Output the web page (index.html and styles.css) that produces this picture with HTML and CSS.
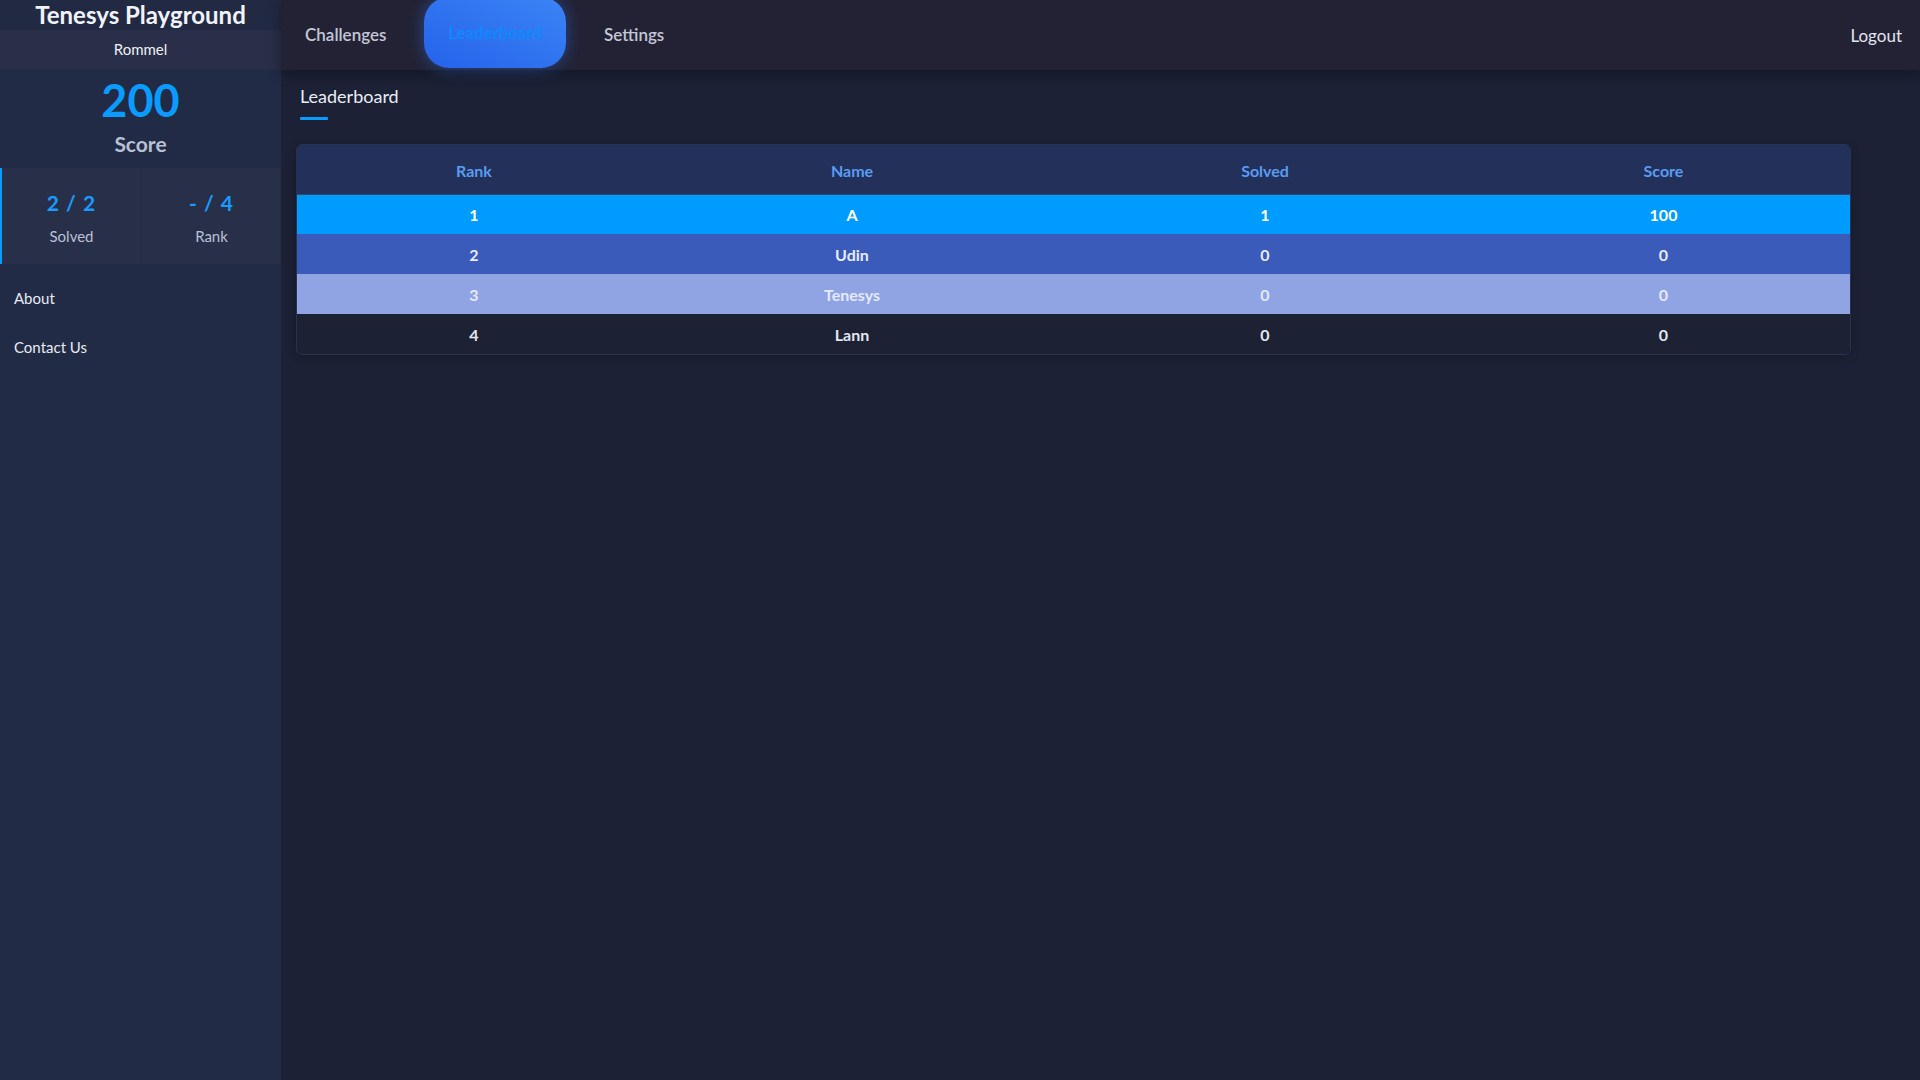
FILE: index.html
```html
<!DOCTYPE html>
<html lang="en">
<head>
<meta charset="utf-8">
<title>Tenesys Playground - Leaderboard</title>
<link rel="stylesheet" href="styles.css">
</head>
<body>
<div class="app">
  <aside class="sidebar">
    <div class="brand">Tenesys Playground</div>
    <div class="user">Rommel</div>
    <div class="score-block">
      <div class="score-value">200</div>
      <div class="score-label">Score</div>
    </div>
    <div class="stats">
      <div class="stat stat-active">
        <div class="stat-value">2 / 2</div>
        <div class="stat-label">Solved</div>
      </div>
      <div class="stat">
        <div class="stat-value">- / 4</div>
        <div class="stat-label">Rank</div>
      </div>
    </div>
    <nav class="side-links">
      <a class="side-link" href="#">About</a>
      <a class="side-link" href="#">Contact Us</a>
    </nav>
  </aside>
  <div class="main">
    <header class="topbar">
      <nav class="tabs">
        <a class="tab" href="#">Challenges</a>
        <a class="tab tab-active" href="#">Leaderboard</a>
        <a class="tab" href="#">Settings</a>
      </nav>
      <a class="logout" href="#">Logout</a>
    </header>
    <section class="content">
      <h2 class="page-title">Leaderboard</h2>
      <div class="title-bar"></div>
      <div class="board">
        <table class="board-table">
          <colgroup>
            <col class="c-rank">
            <col class="c-name">
            <col class="c-solved">
            <col class="c-score">
          </colgroup>
          <thead>
            <tr><th>Rank</th><th>Name</th><th>Solved</th><th>Score</th></tr>
          </thead>
          <tbody>
            <tr class="r-first"><td>1</td><td>A</td><td>1</td><td>100</td></tr>
            <tr class="r-second"><td>2</td><td>Udin</td><td>0</td><td>0</td></tr>
            <tr class="r-third"><td>3</td><td>Tenesys</td><td>0</td><td>0</td></tr>
            <tr class="r-other"><td>4</td><td>Lann</td><td>0</td><td>0</td></tr>
          </tbody>
        </table>
      </div>
    </section>
  </div>
</div>
</body>
</html>
```
FILE: styles.css
```css
* { box-sizing: border-box; }
html, body { margin: 0; padding: 0; }
body {
  background: #1c2135;
  font-family: Lato, "Open Sans", sans-serif;
  color: #e6e9f2;
  height: 1080px;
  overflow: hidden;
}
a { text-decoration: none; color: inherit; }

.app { display: flex; height: 1080px; }

/* Sidebar */
.sidebar {
  width: 281px;
  flex: 0 0 281px;
  background: #222b46;
  display: flex;
  flex-direction: column;
}
.brand {
  height: 30px;
  line-height: 30px;
  text-align: center;
  font-size: 24px;
  font-weight: 700;
  color: #f1f3f9;
  background: #222a43;
  white-space: nowrap;
}
.user {
  height: 39px;
  line-height: 39px;
  text-align: center;
  font-size: 15px;
  color: #eef0f6;
  background: #292f48;
}
.score-block {
  height: 99px;
  padding-top: 9px;
  text-align: center;
}
.score-value {
  font-size: 45px;
  line-height: 45px;
  font-weight: 700;
  color: #0a9bff;
}
.score-label {
  margin-top: 8px;
  font-size: 21px;
  line-height: 26px;
  font-weight: 700;
  color: #b9c0d6;
}
.stats {
  height: 96px;
  display: flex;
  background: #283049;
}
.stat {
  flex: 1;
  text-align: center;
  padding-top: 22px;
}
.stat + .stat { border-left: 1px solid #222a40; }
.stat-active { border-left: 2px solid #0a9bff; }
.stat-value {
  font-size: 21px;
  line-height: 26px;
  font-weight: 700;
  letter-spacing: 1px;
  color: #1a9bff;
}
.stat-label {
  margin-top: 10px;
  font-size: 15px;
  line-height: 20px;
  color: #b9c0d6;
}
.side-links {
  display: flex;
  flex-direction: column;
  padding-top: 10px;
}
.side-link {
  display: block;
  padding: 14px 14px 15px;
  font-size: 15px;
  line-height: 20px;
  color: #e8eaf2;
}

/* Main */
.main {
  flex: 1;
  display: flex;
  flex-direction: column;
  min-width: 0;
}
.topbar {
  height: 70px;
  flex: 0 0 70px;
  background: #232235;
  display: flex;
  justify-content: space-between;
  align-items: flex-start;
  box-shadow: 0 3px 12px rgba(8, 10, 20, 0.45);
  position: relative;
  z-index: 1;
}
.tabs { display: flex; gap: 14px; }
.tab {
  display: block;
  padding: 0 24px;
  height: 68px;
  line-height: 70px;
  font-size: 17px;
  font-weight: 600;
  color: #c3c7d5;
}
.tab-active {
  margin-top: -3px;
  height: 71px;
  line-height: 71px;
  border-radius: 25px;
  background: linear-gradient(to top right, #2563eb, #3b84f5);
  color: #0a8cff;
  font-weight: 500;
  box-shadow: 0 0 16px rgba(50, 120, 245, 0.45);
}
.logout {
  display: block;
  padding-right: 18px;
  height: 70px;
  line-height: 72px;
  font-size: 17px;
  color: #e4e6ee;
}

.content {
  padding: 14px 69px 0 15px;
}
.page-title {
  margin: 0;
  padding-left: 4px;
  font-size: 18px;
  line-height: 24px;
  font-weight: 400;
  color: #e8ecf4;
}
.title-bar {
  margin: 9px 0 0 4px;
  width: 28px;
  height: 3px;
  background: #0a9bff;
  border-radius: 1px;
}
.board {
  margin-top: 24px;
  border: 1px solid #283252;
  border-radius: 6px;
  overflow: hidden;
  box-shadow: 0 2px 8px rgba(0, 0, 0, 0.25);
}
.board-table {
  width: 100%;
  border-collapse: collapse;
  table-layout: fixed;
}
.c-rank { width: 354px; }
.c-name { width: 402px; }
.c-solved { width: 424px; }
.c-score { width: auto; }
.board-table th {
  height: 49px;
  padding: 2px 0 0;
  background: #22305a;
  color: #5a9cf2;
  font-size: 16px;
  font-weight: 700;
  text-align: center;
  border-bottom: 1px solid #3a4463;
}
.board-table td {
  height: 40px;
  padding: 0;
  font-size: 16px;
  font-weight: 700;
  text-align: center;
}
.r-first td { background: #009bff; color: #ffffff; }
.r-second td { background: #3a5bb9; color: #e8ecf8; }
.r-third td { background: #90a4e3; color: #e4eafb; }
.r-other td { background: #1c2234; color: #e2e6f0; }
```
